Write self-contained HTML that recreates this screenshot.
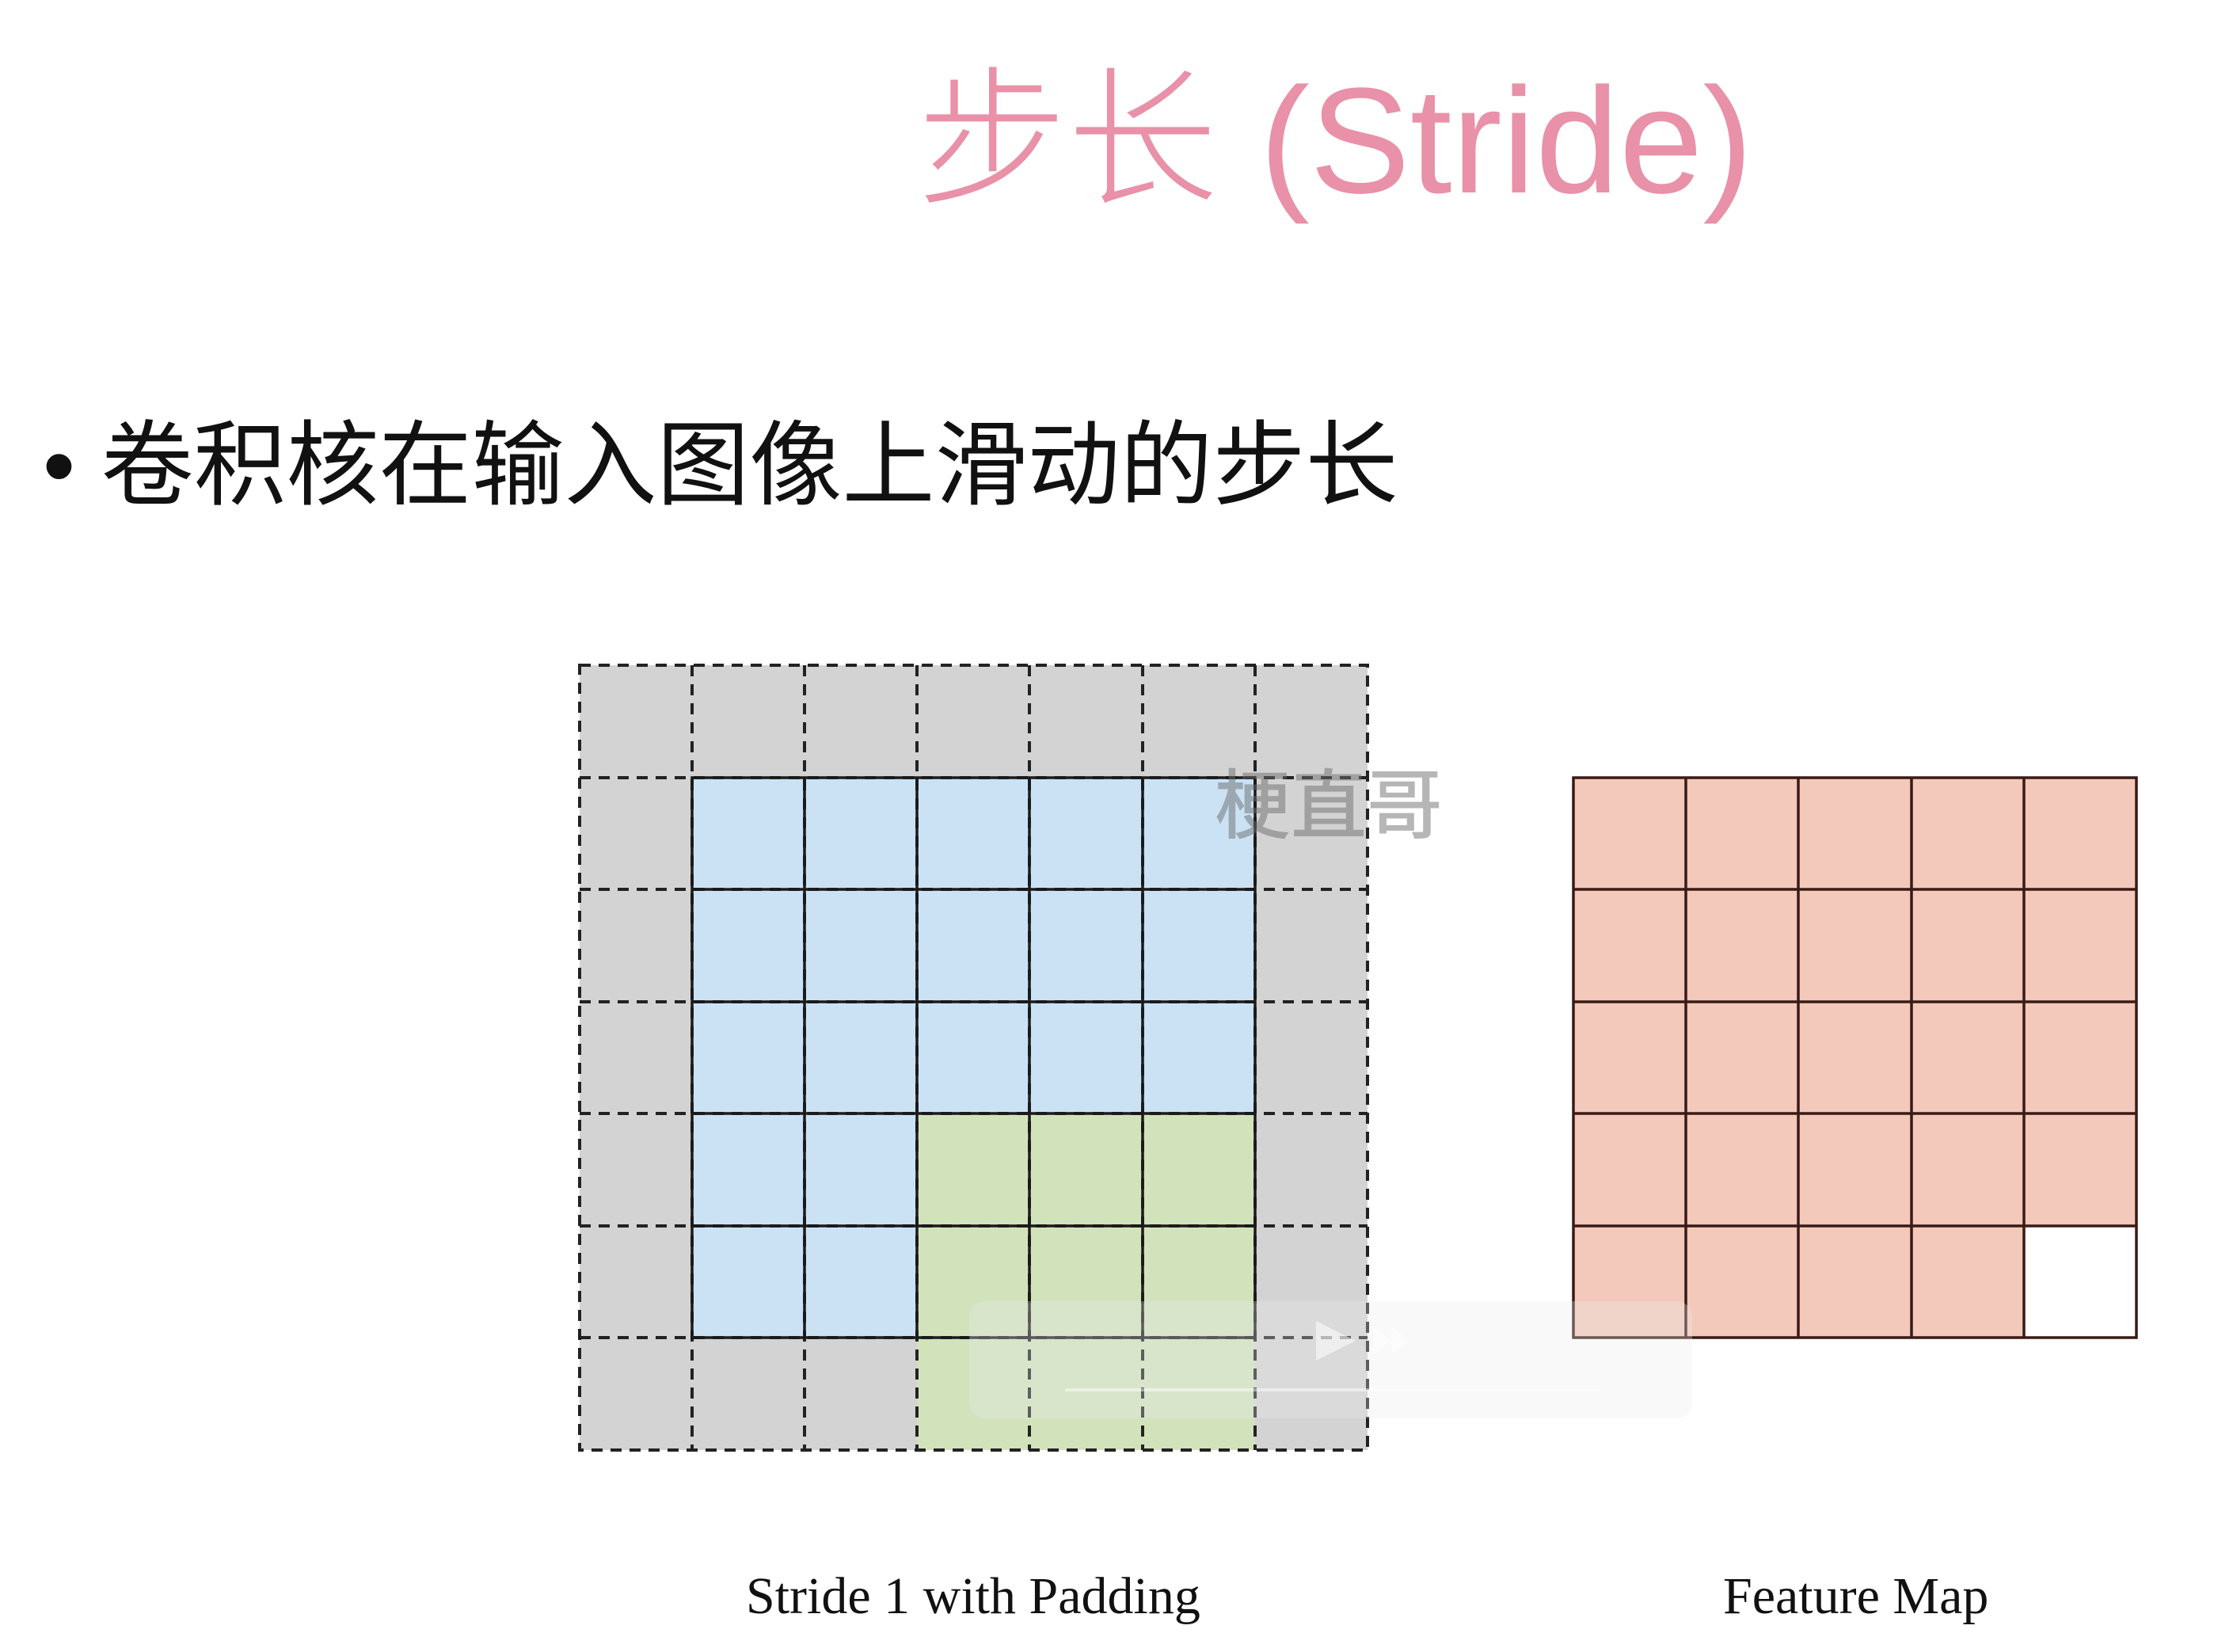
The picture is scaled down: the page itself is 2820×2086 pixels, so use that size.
<!DOCTYPE html>
<html><head><meta charset="utf-8"><style>
html,body{margin:0;padding:0;background:#fff;}
body{width:2820px;height:2086px;position:relative;overflow:hidden;}
.t{position:absolute;white-space:nowrap;}
#title{left:1158px;top:58px;font-family:"Liberation Sans","Noto Sans CJK SC",sans-serif;font-weight:300;font-size:190px;line-height:240px;color:#e891a8;}
#bul{left:54px;top:518px;font-family:"Liberation Sans","Noto Sans CJK SC",sans-serif;font-size:117px;line-height:140px;color:#111;}
#wm{left:1534px;top:940px;font-family:"Noto Sans CJK SC",sans-serif;font-weight:500;font-size:96px;color:rgba(110,110,110,0.5);}
.lab{font-family:"Liberation Serif",serif;font-size:66px;color:#111;top:1978px;}
</style></head><body>
<div class="t" id="title">步长 (Stride)</div>
<div class="t" id="bul">• 卷积核在输入图像上滑动的步长</div>

<svg class="t" style="left:0;top:0" width="2820" height="2086">
  <rect x="732" y="840" width="995" height="991" fill="#d3d3d3"/>
  <rect x="874" y="982" width="711" height="707" fill="#cbe2f5"/>
  <rect x="1158" y="1406" width="427" height="425" fill="#d2e3bc"/>
  <g stroke="#222" stroke-width="4" stroke-dasharray="14,10" fill="none">
    <rect x="732" y="840" width="995" height="991"/>
    <path d="M874 840V1831M1016 840V1831M1158 840V1831M1300 840V1831M1443 840V1831M1585 840V1831"/>
    <path d="M732 982H1727M732 1123H1727M732 1265H1727M732 1406H1727M732 1548H1727M732 1689H1727"/>
  </g>
  <g stroke="#1a1a1a" stroke-width="3.5" fill="none">
    <rect x="874" y="982" width="711" height="707"/>
    <path d="M1016 982V1689M1158 982V1689M1300 982V1689M1443 982V1689"/>
    <path d="M874 1123H1585M874 1265H1585M874 1406H1585M874 1548H1585"/>
  </g>
  <rect x="1987" y="982" width="711" height="707" fill="#f3c9bb"/>
  <rect x="2556" y="1548" width="142" height="141" fill="#fff"/>
  <g stroke="#3a1a14" stroke-width="3.5" fill="none">
    <rect x="1987" y="982" width="711" height="707"/>
    <path d="M2129 982V1689M2271 982V1689M2414 982V1689M2556 982V1689"/>
    <path d="M1987 1123H2698M1987 1265H2698M1987 1406H2698M1987 1548H2698"/>
  </g>
  <rect x="1224" y="1643" width="913" height="148" rx="20" fill="rgba(235,235,235,0.3)"/>
  <path d="M1662 1668L1712 1693L1662 1718Z" fill="rgba(255,255,255,0.55)"/>
  <path d="M1734 1676L1757 1693L1734 1710ZM1757 1676L1780 1693L1757 1710Z" fill="rgba(255,255,255,0.55)"/>
  <line x1="1345" y1="1755" x2="2020" y2="1755" stroke="rgba(255,255,255,0.45)" stroke-width="4"/>
</svg>
<div class="t" id="wm">梗直哥</div>
<div class="t lab" style="left:942px;">Stride 1 with Padding</div>
<div class="t lab" style="left:2176px;">Feature Map</div>
</body></html>
